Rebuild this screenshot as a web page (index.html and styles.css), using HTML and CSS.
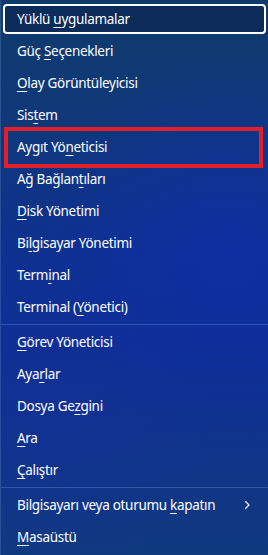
FILE: index.html
```html
<!DOCTYPE html>
<html lang="tr">
<head>
<meta charset="utf-8">
<link rel="stylesheet" href="styles.css">
</head>
<body>
<div class="menu">
  <div class="item focus"><span>Yüklü <u>u</u>ygulamalar</span></div>
  <div class="item"><span>Güç <u>S</u>eçenekleri</span></div>
  <div class="item"><span><u>O</u>lay Görüntüleyicisi</span></div>
  <div class="item"><span>Sis<u>t</u>em</span></div>
  <div class="item marked"><span>Aygıt Yö<u>n</u>eticisi</span></div>
  <div class="item"><span>Ağ Bağlan<u>t</u>ıları</span></div>
  <div class="item"><span><u>D</u>isk Yönetimi</span></div>
  <div class="item"><span>Bi<u>l</u>gisayar Yönetimi</span></div>
  <div class="item"><span>Term<u>i</u>nal</span></div>
  <div class="item"><span>Terminal (<u>Y</u>önetici)</span></div>
  <div class="sep"></div>
  <div class="item"><span><u>G</u>örev Yöneticisi</span></div>
  <div class="item"><span>Aya<u>r</u>lar</span></div>
  <div class="item"><span>Dosya Ge<u>z</u>gini</span></div>
  <div class="item"><span><u>A</u>ra</span></div>
  <div class="item"><span><u>Ç</u>alıştır</span></div>
  <div class="sep"></div>
  <div class="item sub">
    <span>Bilgisayarı veya oturumu <u>k</u>apatın</span>
    <svg class="chev" width="8" height="10" viewBox="0 0 8 10"><path d="M2.5 1.5 L6 5 L2.5 8.5" fill="none" stroke="#ffffff" stroke-width="1.1" stroke-linecap="round" stroke-linejoin="round"/></svg>
  </div>
  <div class="item"><span><u>M</u>asaüstü</span></div>
</div>
</body>
</html>
```
FILE: styles.css
```css
html, body {
  margin: 0;
  padding: 0;
  width: 268px;
  height: 555px;
  overflow: hidden;
}
body {
  background:
    radial-gradient(ellipse 70% 35% at 85% 45%, rgba(16, 44, 176, 0.55) 0%, rgba(16, 44, 176, 0) 100%),
    radial-gradient(ellipse 60% 30% at 20% 75%, rgba(20, 48, 160, 0.35) 0%, rgba(20, 48, 160, 0) 100%),
    linear-gradient(180deg, #0f3b6b 0%, #0f387a 22%, #0e3190 45%, #0f2f93 62%, #10338a 80%, #0f3a7e 100%);
  font-family: "Noto Sans", "Open Sans", sans-serif;
  color: #ffffff;
}
.menu {
  display: flex;
  flex-direction: column;
  padding: 3px 2px 0 2px;
  height: 555px;
  box-sizing: border-box;
  border-left: 1px solid rgba(120, 160, 210, 0.25);
}
.item {
  position: relative;
  height: 30px;
  margin: 1px 0;
  padding: 0 12px;
  border: 2px solid transparent;
  border-radius: 4px;
  box-sizing: border-box;
  display: flex;
  align-items: center;
  font-size: 13.5px;
  letter-spacing: -0.3px;
  white-space: nowrap;
}
.item u {
  text-decoration: underline;
  text-decoration-thickness: 1px;
  text-underline-offset: 3px;
}
.focus {
  border-color: #ffffff;
  background: rgba(8, 34, 76, 0.6);
}
.marked::after {
  content: "";
  position: absolute;
  left: -1px;
  right: 1px;
  top: -7px;
  bottom: -8px;
  border: 4px solid #e3202a;
  pointer-events: none;
}
.sep {
  height: 3px;
  flex: none;
  display: flex;
  align-items: center;
  margin: 0 -2px;
}
.sep::before {
  content: "";
  display: block;
  width: 100%;
  height: 1px;
  background: rgba(110, 150, 220, 0.35);
}
.sub {
  justify-content: space-between;
}
.chev {
  margin-right: 1px;
}
```
